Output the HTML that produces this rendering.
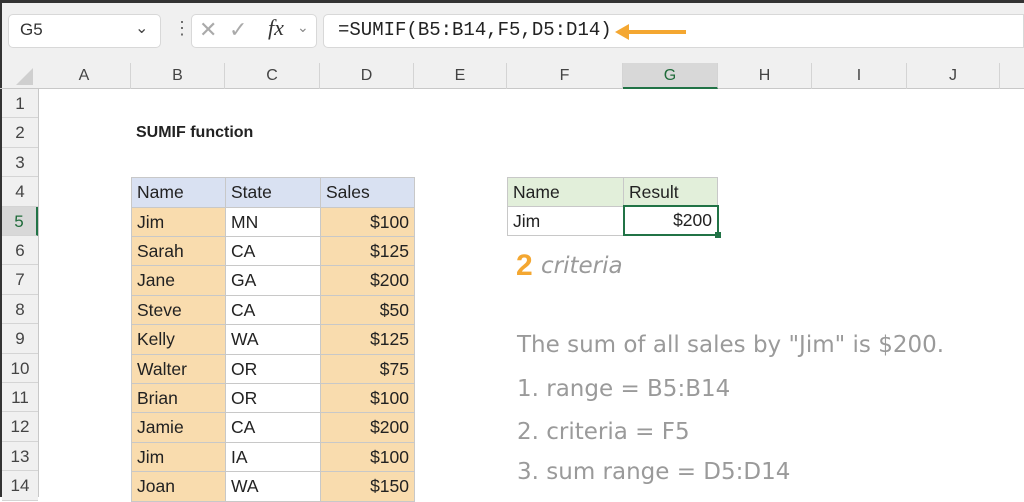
<!DOCTYPE html><html><head><style>
*{margin:0;padding:0;box-sizing:border-box}
body{width:1024px;height:497px;overflow:hidden;background:#fff;font-family:"Liberation Sans",Arial,sans-serif;position:relative}
.a{position:absolute}
.ch{position:absolute;top:63px;height:26px;font-size:16px;color:#444;text-align:center;line-height:26px;border-right:1px solid #d4d4d4}
.rh{position:absolute;left:2px;width:36px;font-size:17px;color:#444;text-align:center;border-bottom:1px solid #d4d4d4;background:#f0f0f0}
.c{position:absolute;font-size:17.5px;color:#222;padding:0 5px;border:1px solid #c8c8c8;line-height:28px;white-space:nowrap;overflow:hidden}
.r{text-align:right}
.hw{position:absolute;color:#9a9a9a;font-family:"DejaVu Sans",sans-serif;font-size:23px;white-space:nowrap}
</style></head><body>
<div class="a" style="left:0;top:0;width:1024px;height:89px;background:#f0f0f0;border-top:3px solid #333"></div>
<div class="a" style="left:0;top:0;width:2px;height:497px;background:#333"></div>
<div class="a" style="left:8px;top:14px;width:153px;height:34px;background:#fff;border:1px solid #d8d8d8;border-radius:5px"></div>
<div class="a" style="left:20px;top:20px;font-size:17px;color:#333">G5</div>
<div class="a" style="left:135px;top:18px;font-size:16px;color:#444">&#8964;</div>
<div class="a" style="left:173px;top:18px;font-size:18px;color:#666">&#8942;</div>
<div class="a" style="left:191px;top:14px;width:126px;height:34px;background:#fff;border:1px solid #d8d8d8;border-radius:5px"></div>
<div class="a" style="left:199px;top:17px;font-size:22px;color:#aaa">&#10005;</div>
<div class="a" style="left:229px;top:17px;font-size:22px;color:#aaa">&#10003;</div>
<div class="a" style="left:268px;top:15px;font-size:22px;color:#333;font-family:'Liberation Serif',serif;font-style:italic">fx</div>
<div class="a" style="left:297px;top:19px;font-size:14px;color:#888">&#8964;</div>
<div class="a" style="left:323px;top:14px;width:701px;height:34px;background:#fff;border:1px solid #d8d8d8;border-radius:5px 0 0 5px"></div>
<div class="a" style="left:338px;top:19px;font-size:19px;color:#222;font-family:'Liberation Mono',monospace">=SUMIF(B5:B14,F5,D5:D14)</div>
<svg class="a" style="left:614px;top:23px" width="74" height="18"><path d="M12 9H72" stroke="#f4a731" stroke-width="4"/><path d="M1 9L15 1V17Z" fill="#f4a731"/></svg>
<div class="a" style="left:0;top:88px;width:1024px;height:1px;background:#c8c8c8"></div>
<svg class="a" style="left:16px;top:68px" width="18" height="18"><path d="M17 0V17H0Z" fill="#cfcfcf"/></svg>
<div class="ch" style="left:38px;width:93px">A</div><div class="ch" style="left:131px;width:94px">B</div><div class="ch" style="left:225px;width:95px">C</div><div class="ch" style="left:320px;width:94px">D</div><div class="ch" style="left:414px;width:93px">E</div><div class="ch" style="left:507px;width:116px">F</div><div class="ch" style="left:623px;width:95px;background:#d8d8d8;color:#1f6b3a;border-bottom:2px solid #217346">G</div><div class="ch" style="left:718px;width:94px">H</div><div class="ch" style="left:812px;width:95px">I</div><div class="ch" style="left:907px;width:93px">J</div>
<div class="a" style="left:38px;top:89px;width:1px;height:408px;background:#c8c8c8"></div>
<div class="rh" style="top:89px;height:29.4px;line-height:29px">1</div><div class="rh" style="top:118.4px;height:29.4px;line-height:29px">2</div><div class="rh" style="top:147.8px;height:29.4px;line-height:29px">3</div><div class="rh" style="top:177.2px;height:29.4px;line-height:29px">4</div><div class="rh" style="top:206.6px;height:29.4px;line-height:29px;background:#d8d8d8;color:#1f6b3a;border-right:2px solid #217346">5</div><div class="rh" style="top:236px;height:29.4px;line-height:29px">6</div><div class="rh" style="top:265.4px;height:29.4px;line-height:29px">7</div><div class="rh" style="top:294.8px;height:29.4px;line-height:29px">8</div><div class="rh" style="top:324.2px;height:29.4px;line-height:29px">9</div><div class="rh" style="top:353.6px;height:29.4px;line-height:29px">10</div><div class="rh" style="top:383px;height:29.4px;line-height:29px">11</div><div class="rh" style="top:412.4px;height:29.4px;line-height:29px">12</div><div class="rh" style="top:441.8px;height:29.4px;line-height:29px">13</div><div class="rh" style="top:471.2px;height:29.4px;line-height:29px">14</div>
<div class="a" style="left:136px;top:124px;font-size:16px;font-weight:bold;color:#222">SUMIF function</div>
<div id="t"></div>
<div class="c" style="left:507px;top:177px;width:117px;height:30px;background:#e2efda">Name</div>
<div class="c" style="left:623px;top:177px;width:95px;height:30px;background:#e2efda">Result</div>
<div class="c" style="left:507px;top:206px;width:117px;height:30px">Jim</div>
<div class="c r" style="left:623px;top:205px;width:96px;height:31px;border:2px solid #217346;line-height:27px">$200</div>
<div class="a" style="left:715px;top:232px;width:6px;height:6px;background:#217346"></div>
<div class="a" style="left:516px;top:249px;font-size:30px;font-weight:bold;color:#f4a731">2</div>
<div class="hw" style="left:541px;top:253px;font-style:italic">criteria</div>
<div class="hw" style="left:517px;top:332px">The sum of all sales by "Jim" is $200.</div>
<div class="hw" style="left:517px;top:376px">1. range = B5:B14</div>
<div class="hw" style="left:517px;top:419px">2. criteria = F5</div>
<div class="hw" style="left:517px;top:459px">3. sum range = D5:D14</div>
<script>
var d=[["Jim","MN","$100"],["Sarah","CA","$125"],["Jane","GA","$200"],["Steve","CA","$50"],["Kelly","WA","$125"],["Walter","OR","$75"],["Brian","OR","$100"],["Jamie","CA","$200"],["Jim","IA","$100"],["Joan","WA","$150"]];
var h='',x=[131,225,320],w=[95,96,95];
function cell(i,y,t,bg,r){h+='<div class="c'+(r?' r':'')+'" style="left:'+x[i]+'px;top:'+y+'px;width:'+w[i]+'px;height:30.4px;background:'+bg+'">'+t+'</div>';}
["Name","State","Sales"].forEach(function(t,i){cell(i,177.2,t,'#d9e1f2',0)});
d.forEach(function(r,k){var y=206.6+k*29.4;cell(0,y,r[0],'#f9dcae',0);cell(1,y,r[1],'#fff',0);cell(2,y,r[2],'#f9dcae',1);});
document.getElementById('t').innerHTML=h;
</script>
</body></html>
